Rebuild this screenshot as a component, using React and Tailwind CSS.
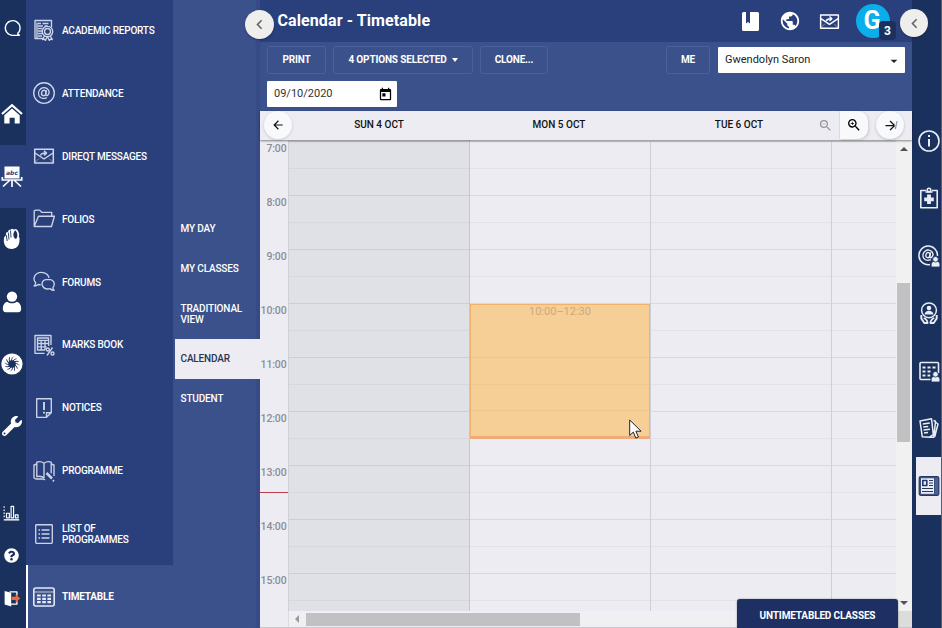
import React from 'react';
import { MdPublic, MdToday, MdArrowBack, MdArrowForward, MdZoomIn, MdZoomOut, MdChevronLeft, MdArrowDropDown } from 'react-icons/md';
import { FaWrench, FaQuestionCircle } from 'react-icons/fa';

const Svg = ({ size = 22, sw = 1.35, className = '', children }) => (
  <svg width={size} height={size} viewBox="0 0 22 22" fill="none" stroke="currentColor" strokeWidth={sw} strokeLinejoin="round" className={'shrink-0 ' + className}>
    {children}
  </svg>
);

const AtGlyph = ({ s = 1, x = 0, y = 0 }) => (
  <g transform={`translate(${x} ${y}) scale(${s})`}>
    <ellipse cx="10.8" cy="11" rx="2.2" ry="2.7" transform="rotate(15 10.8 11)" />
    <path d="M13.4 8.2l-.7 4.2c-.2 1.6 1.2 1.6 2.2.6 1.2-1.3 1.4-3.7.2-5.3C13.600 5.500 10.300 5 8 6.600 5.600 8.300 5 11.600 6.200 14c1.500 2.500 4.800 3 7.600 1.600" />
  </g>
);

const ReportIcon = () => (
  <Svg>
    <path d="M10 19.500H2V1.500h16.500V8" />
    <path d="M4 19V3.500M5 4.500h3M9.500 4.500h6M5 7h5M11.500 7h3M5 9.500h4.500M5 12h4M5 14.500h4M5 17h4" />
    <circle cx="14.500" cy="12.500" r="5.200" />
    <circle cx="14.500" cy="12.500" r="3" />
    <path d="M11.500 17l-2 3.500 2-.3.900 1.300 2-4 2 4 .9-1.300 2 .3-2-3.500" />
  </Svg>
);
const AttendanceIcon = () => (<Svg><circle cx="11" cy="11" r="10.300" /><AtGlyph /></Svg>);
const MailIcon = ({ size = 22 }) => (
  <Svg size={size} sw={1.500}>
    <path d="M1.700 4.200h18.600v13.800H1.700z" />
    <path d="M2 8l9 6 9-6" />
    <path d="M2 17.500l4-4M20 17.500l-4-4" strokeWidth=".8" opacity=".6" />
    <path d="M7.500 10.500c.6-1.800 2-2.500 5.300-2.400M11 5.800l2.500 2.300-2.500 2.300" />
  </Svg>
);
const FolderIcon = () => (
  <Svg><path d="M1.200 18.500V2.800l1.500-.700h4l2 2.300h10v3.800M1.200 18.500h17.300L21.400 8.200H5.500L1.200 18.500z" /></Svg>
);
const ForumIcon = () => (
  <Svg>
    <path d="M7.800 13.800c-.8 0-1.600-.1-2.400-.3-1.200 1-2.700 1.500-4.200 1.500.9-.9 1.500-2 1.500-3.200C.1 9 .5 4.600 4 2.500c4.600-2.600 11-.6 12 4.300" />
    <path d="M15 8.200c-3.600 0-6 2.100-6 4.900s2.700 4.900 6 4.900c.8 0 1.600-.1 2.300-.3 1 1.200 2.200 1.700 3.800 1.700-.8-.8-1.200-1.900-1.200-2.900 1-.9 1.400-2.100 1.400-3.400 0-2.800-2.700-4.900-6.300-4.900z" />
  </Svg>
);
const MarksIcon = () => (
  <Svg>
    <path d="M11.500 19.300H2V1.500h16V11" />
    <path d="M4.500 4h11v2.300h-11zM4.500 6.300V16H12M4.500 9.500h11.200M4.500 12.800h9M8.200 6.300V16M12 6.300V16M15.700 6.300V12" />
    <path d="M19.500 13.500l-5.500 8" /><circle cx="14.800" cy="15.500" r="1.500" /><circle cx="19.500" cy="19.500" r="1.500" />
  </Svg>
);
const NoticeIcon = () => (
  <Svg>
    <path d="M13.500 20.300H3.700V1.700h14.600v14l-4.800 4.600v-4.600h4.800" />
    <path d="M11 5v8" strokeWidth="1.900" /><path d="M11 14.800v1.800" strokeWidth="1.900" />
  </Svg>
);
const ProgrammeIcon = () => (
  <Svg>
    <path d="M11 3.200C8.500 1.400 5.800 1.400 3.800 2.200v14.500c2.400-.8 5-.6 7.200 1.300M11 3.200v14.800M11 3.200c2.500-1.800 5.200-1.800 7.200-1v11" />
    <path d="M3.800 4L1 5v13l2 1h7.500c.5.600 1 .6 1.600.3M18.200 4L21 5v11" />
    <path d="M13.500 13l5.500 5.500" strokeWidth="2.500" /><path d="M19.800 20.200l1.200 1" strokeWidth="1.800" />
  </Svg>
);
const ListIcon = () => (
  <Svg>
    <rect x="2.700" y="1.700" width="16.600" height="18.600" rx=".8" />
    <path d="M5.500 7H7M8.500 7h8M5.500 11H7M8.500 11h8M5.500 15H7M8.500 15h8" strokeWidth="1.600" />
  </Svg>
);
const TableIcon = () => (
  <Svg>
    <rect x=".8" y="2" width="20.400" height="18" rx="2" strokeWidth="1.600" />
    <path d="M1 6h20" strokeWidth=".8" />
    <path d="M4 9.500h3.700M9.200 9.500h3.700M14.400 9.500H18M4 12.800h3.700M9.200 12.800h3.700M14.400 12.800H18M4 16.200h3.700M9.200 16.200h3.700M14.400 16.200H18" strokeWidth="2.200" />
  </Svg>
);

const modules = [
  ['ACADEMIC REPORTS', ReportIcon],
  ['ATTENDANCE', AttendanceIcon],
  ['DIREQT MESSAGES', MailIcon],
  ['FOLIOS', FolderIcon],
  ['FORUMS', ForumIcon],
  ['MARKS BOOK', MarksIcon],
  ['NOTICES', NoticeIcon],
  ['PROGRAMME', ProgrammeIcon],
  ['LIST OF PROGRAMMES', ListIcon],
];

const HomeIcon = () => (
  <Svg>
    <path d="M1 11L11 2.200 21 11" strokeWidth="2.300" strokeLinejoin="miter" />
    <path d="M3.300 12.300L11 5.600l7.700 6.700v8.200h-5v-5.700H8.600v5.700H3.300z" fill="currentColor" stroke="none" />
  </Svg>
);
const BoardIcon = () => (
  <Svg sw={1.700}>
    <rect x="3.500" y=".5" width="15" height="12" fill="currentColor" stroke="none" />
    <path d="M1.300 11v3h19.400v-3M11 14v7M8.500 14.500l-6.500 6M13.500 14.500l6.500 6" strokeLinejoin="miter" />
    <text x="11" y="8.600" textAnchor="middle" fontSize="6" fontStyle="italic" fontWeight="700" fontFamily="DejaVu Sans" fill="#2a407c" stroke="none">abc</text>
  </Svg>
);
const HandIcon = () => (
  <Svg>
    <path d="M2.800 12.500L3.200 9l1.600-1.500.4-3L7 4l.8-2L10 1.600l1-.9 2 .8 2-.4 2 1.600 1.200 3.600-.4 3 .8.500-.2 3.800c-.3 4.300-3.200 7.400-7.600 7.400-4.700 0-8-3.500-8-8.500z" fill="currentColor" stroke="none" />
    <path d="M5.300 7L6.200 13M7.300 4.500L8 11.500M9.500 2.500L10 9.500" stroke="#1b315d" strokeWidth=".9" />
    <path d="M14 10.800c-2.300-2.500-2.200-6.500.4-8.600 2.200 2.300 2.700 5.500 1 8.600z" fill="#1b315d" stroke="none" />
  </Svg>
);
const PersonIcon = () => (
  <Svg><circle cx="11" cy="5.600" r="5.200" fill="currentColor" stroke="none" /><path d="M1.800 17.500c0-4 1.800-6 4.500-6.800 3 2.100 6.500 2.100 9.400 0 2.700.8 4.500 2.800 4.500 6.800 0 2.500-1 3.700-3 3.700H4.800c-2 0-3-1.200-3-3.700z" fill="currentColor" stroke="none" /></Svg>
);
const SunIcon = () => (
  <Svg>
    <circle cx="11" cy="11" r="10.600" fill="currentColor" stroke="none" />
    <circle cx="11" cy="11" r="3.800" fill="#1b315d" stroke="none" />
    {[0, 30, 60, 90, 120, 150, 180, 210, 240, 270, 300, 330].map((a) => (
      <path key={a} d="M10.600 8c-.3-1.600.2-2.900 1.700-4" stroke="#1b315d" strokeWidth=".9" transform={`rotate(${a} 11 11)`} />
    ))}
  </Svg>
);
const ChatIcon = () => (<Svg size={18} sw={1.600}><path d="M17.500 18A9 9 0 1 0 12 20h8.500M17.500 18l3 2" /></Svg>);
const ChartIcon = () => (
  <Svg size={17} sw={1.500}><path d="M1 20.500h20" strokeWidth="1.800" /><path d="M1.500 3v15" strokeDasharray="2 2" /><path d="M4.500 18v-6h3.700v6zM10.500 18V3h3.200v15zM16 18v-4h3.500v4z" /></Svg>
);
const ExitIcon = () => (
  <Svg size={18}>
    <path d="M8 3.500h9V8M17 15v3.500H9" strokeWidth="1.600" />
    <path d="M2 2.500l8 2v17l-8-2.500z" fill="currentColor" stroke="none" />
    <path d="M10.500 9.500h5V6.500l5.500 5-5.500 5v-3h-5z" fill="#ef6a3a" stroke="none" />
  </Svg>
);

const MiniPerson = () => (
  <g fill="currentColor" stroke="#1b315d" strokeWidth=".8"><path d="M13.200 22v-2.500c0-1.800 1.200-2.800 2.300-3h4c1.300.2 2.400 1.200 2.400 3V22z" /><circle cx="17.500" cy="14.300" r="2.800" /></g>
);
const InfoIcon = () => (<Svg sw={1.600}><circle cx="11" cy="11" r="10" /><path d="M11 9v7.500M11 5v2" strokeWidth="2" /></Svg>);
const ClipIcon = () => (
  <Svg sw={1.600}><path d="M8 3.500H2.800v17.200h16.400V3.500H14" /><circle cx="11" cy="3" r="1.800" /><path d="M7.500 5h7" /><path d="M11 7.500v9.600M6.200 12.300h9.600" strokeWidth="3.800" /></Svg>
);
const AtPersonIcon = () => (<Svg sw={1.500}><path d="M12 19.500A9.300 9.300 0 1 1 19.500 11" /><AtGlyph s={0.95} x={-0.3} y={-0.3} /><MiniPerson /></Svg>);
const CareIcon = () => (
  <Svg sw={1.500}>
    <circle cx="11" cy="8.300" r="7.400" /><circle cx="11" cy="6" r="2.300" fill="currentColor" stroke="none" /><path d="M6.600 12.500c0-5 8.800-5 8.800 0z" fill="currentColor" stroke="none" />
    <path d="M3.300 13v3.500l3 4.500h3.200c0-2.500-1.500-4-3.700-5M18.700 13v3.500l-3 4.500h-3.200c0-2.500 1.500-4 3.700-5" strokeWidth="1.900" />
  </Svg>
);
const TablePersonIcon = () => (
  <Svg sw={1.600}><rect x="2" y="2.500" width="18.500" height="17" rx="1" /><path d="M4.500 7.500h3M9.500 7.500h3M14.500 7.500h3M4.500 11.500h3M9.500 11.500h3M4.500 15.500h3M9.500 15.500h3" strokeWidth="2" /><path d="M12.500 13h9.500v9h-9.500z" fill="#1b315d" stroke="none" /><MiniPerson /></Svg>
);
const PapersIcon = () => (
  <Svg sw={1.500}><path d="M2 4l11.500-2.200 1.800 15.700-3.800 2.700-7.200-.4zM15.500 3.500l2 .8-1.700 16-4-.3M18 5.500l2 1.500-3.300 12.700" /><path d="M4.800 7l7-1M5.200 10l5-.6M5.500 13l6.500-.8M6 16l4-.5" /></Svg>
);
const NewsIcon = () => (
  <Svg className="text-[#23386a]">
    <rect x="1.200" y="1.700" width="19.600" height="18.600" rx="1.500" fill="#4d6290" strokeWidth="1.200" />
    <path d="M2.500 2.800h14v16.500h-14z" fill="#ececf2" strokeWidth=".8" />
    <rect x="4.800" y="5.500" width="4" height="5" strokeWidth="1.600" />
    <path d="M11 5.500h4M11 8h4M11 10.500h4M4 13.500h11M4 16.500h11" strokeWidth="1.200" />
  </Svg>
);

const RailCell = ({ icon: Icon, className = '' }) => (
  <div className={'flex shrink-0 items-center justify-center pr-[3px] ' + className}><Icon /></div>
);

const Rail = () => (
  <nav className="flex w-[26px] shrink-0 flex-col bg-[#1b315d] text-white">
    <RailCell icon={ChatIcon} className="mb-[27px] h-[56px]" />
    <RailCell icon={HomeIcon} className="h-[62px]" />
    <RailCell icon={BoardIcon} className="h-[63px] bg-[#2a407c]" />
    <RailCell icon={HandIcon} className="h-[62px]" />
    <RailCell icon={PersonIcon} className="h-[63px]" />
    <RailCell icon={SunIcon} className="h-[62px]" />
    <RailCell icon={() => <FaWrench size={20} />} className="h-[63px] pb-px" />
    <RailCell icon={ChartIcon} className="mt-auto h-[42px] pb-[2px]" />
    <RailCell icon={() => <FaQuestionCircle size={15} />} className="h-[43px]" />
    <RailCell icon={ExitIcon} className="mb-[9px] h-[42px]" />
  </nav>
);

const Modules = () => (
  <nav className="flex w-[147px] shrink-0 flex-col text-[10px] font-medium leading-[11px] tracking-[-0.2px] text-white">
    <div className="h-[565px] bg-[#2a407c] shadow-[0_0_1px_rgba(20,35,80,0.35)]">
      {modules.map(([label, Icon]) => (
        <div key={label} className="flex h-[62.900px] items-center gap-[7px] pb-[2px] pl-[7px]">
          <span className="text-[#cbd4e8]"><Icon /></span>
          <span className="w-[100px]">{label}</span>
        </div>
      ))}
    </div>
    <div className="flex grow items-center gap-[7px] border-l-2 border-white pl-[5px] font-bold">
      <span className="text-[#e3e8f4]"><TableIcon /></span>
      <span>TIMETABLE</span>
    </div>
  </nav>
);

const SubItem = ({ children, className = 'h-[40px]' }) => (
  <div className={'flex items-center pl-[7.500px] ' + className}>{children}</div>
);

const SubMenu = () => (
  <nav className="w-[87px] shrink-0 bg-[linear-gradient(90deg,transparent_82px,#364b86_84px)] pt-[208px] text-[10px] font-medium leading-[11px] tracking-[-0.150px] text-white">
    <SubItem>MY DAY</SubItem>
    <SubItem>MY CLASSES</SubItem>
    <SubItem className="h-[51px] w-[75px]">TRADITIONAL VIEW</SubItem>
    <div className="ml-[2px] flex h-[40px] items-center bg-[#ececf2] pb-px pl-[5.500px] text-[#2b3550]">CALENDAR</div>
    <SubItem className="h-[39px]">STUDENT</SubItem>
  </nav>
);

const ToolButton = ({ children, className }) => (
  <div className={'flex h-[28px] shrink-0 items-center justify-center rounded-[3px] border border-[#4c619b] pb-px text-[10px] font-bold tracking-[-0.150px] text-white ' + className}>{children}</div>
);

const Header = () => (
  <header className="flex h-[42px] shrink-0 items-center bg-[#2a407c] pl-[17.500px] text-white">
    <h1 className="grow text-[16px] font-bold leading-[20px] tracking-[0.1px]">Calendar - Timetable</h1>
    <div className="flex items-center">
      <svg width="17" height="19" viewBox="0 0 17 19"><path d="M1.500 0H4v11.500l2-1.500 2 1.500V0h7.500Q17 0 17 1.500v16Q17 19 15.500 19h-14Q0 19 0 17.500v-16Q0 0 1.500 0z" fill="white" /></svg>
      <MdPublic size={22} className="ml-[20px]" />
      <span className="ml-[18px]"><MailIcon size={21} /></span>
      <div className="relative mr-[22px] ml-[16px] flex size-[34px] items-center justify-center rounded-full bg-[#0aaeea] text-[25px] font-bold">
        <span className="pr-[2px]">G</span>
        <span className="absolute top-[17px] left-[23px] flex h-[19px] w-[17px] items-center justify-center rounded-[4px] bg-[#1b315d] text-[12px]">3</span>
      </div>
    </div>
  </header>
);

const Toolbar = () => (
  <div className="flex h-[69px] shrink-0 flex-col gap-[7px] pt-[4px] pl-[7px]">
    <div className="flex items-start pr-[7px]">
      <ToolButton className="w-[59px]">PRINT</ToolButton>
      <ToolButton className="ml-[7px] w-[140px] gap-[5px]">4 OPTIONS SELECTED <span className="border-x-[3px] border-t-4 border-x-transparent border-t-white" /></ToolButton>
      <ToolButton className="ml-[7px] w-[68px]">CLONE...</ToolButton>
      <ToolButton className="ml-auto w-[44px]">ME</ToolButton>
      <div className="ml-[8px] mt-px flex h-[26px] w-[187px] items-center justify-between rounded-[1px] bg-white pr-[3px] pl-[7px] text-[11px] text-[#222]">
        Gwendolyn Saron
        <MdArrowDropDown size={16} className="mt-[1px]" />
      </div>
    </div>
    <div className="flex h-[26px] w-[130px] items-center justify-between rounded-[1px] bg-white pr-[4px] pl-[7px] text-[11px] text-[#333]">
      09/10/2020
      <MdToday size={15} className="text-black" />
    </div>
  </div>
);

const DayHead = () => (
  <div className="relative z-10 flex h-[29px] shrink-0 items-center bg-[#ececf2] pb-[2px] pl-[29px] text-[10px] font-medium text-[#111] shadow-[0_1px_2px_rgba(0,0,0,0.45)]">
    <div className="w-[180px] text-center">SUN 4 OCT</div>
    <div className="w-[180px] text-center">MON 5 OCT</div>
    <div className="w-[180px] text-center">TUE 6 OCT</div>
    <div className="absolute top-0 left-[4px] flex size-[28px] items-center justify-center rounded-full bg-[#f8f9fb] shadow-[0_1px_3px_rgba(0,0,0,0.15)]"><MdArrowBack size={14} /></div>
    <div className="absolute top-0 left-[552px] flex h-[28px] w-[28px] items-center justify-center border-r border-[#dfe0e5] bg-[#ececf2] text-[#96979d]"><MdZoomOut size={15} /></div>
    <div className="absolute top-0 left-[580px] flex h-[28px] w-[28px] items-center justify-center rounded-r-[10px] bg-[#f8f9fb] text-black shadow-[1px_1px_3px_rgba(0,0,0,0.15)]"><MdZoomIn size={16} /></div>
    <div className="absolute top-0 left-[616px] flex size-[28px] items-center justify-center rounded-full bg-[#f8f9fb] shadow-[0_1px_3px_rgba(0,0,0,0.2)]">
      <MdArrowForward size={15} />
      <span className="absolute left-[13px] bg-linear-to-r from-transparent from-55% to-[#8b97b0] to-65% bg-clip-text text-transparent">W</span>
    </div>
  </div>
);

const hours = [7, 8, 9, 10, 11, 12, 13, 14, 15];

const DayColumn = ({ className, lines, children }) => (
  <div className={'relative shrink-0 ' + className}>
    {hours.map((h) => (
      <div key={h} className={'h-[54px] border-t ' + lines}><div className="h-[27px] border-b border-black/4" /></div>
    ))}
    {children}
  </div>
);

const Grid = () => (
  <div className="flex min-h-0 grow overflow-hidden bg-[#ececf2]">
    <div className="w-[29px] shrink-0 border-r border-[#cfd0d6] pt-[1px]">
      <div className="relative">
        {hours.map((h) => (
          <div key={h} className="flex h-[54px] justify-end pt-[1px] pr-[1.500px] text-[10.500px] font-medium leading-[13px] tracking-[-0.150px] text-[#8c8d94]">{h}:00</div>
        ))}
        <div className="absolute top-[351px] left-0 h-px w-[28px] bg-[#b5404a]" />
      </div>
    </div>
    <div className="flex w-[607px] shrink-0 overflow-hidden pt-[1px]">
      <DayColumn className="-mt-px w-[181px] border-r border-[#c6c7cc] bg-[#e0e1e6] pt-px" lines="border-[#cdced3]" />
      <DayColumn className="w-[181px] border-r border-[#cfd0d6]" lines="border-[#d8d9de]">
        <div className="absolute top-[163px] left-0 h-[135px] w-[180px] border border-b-[3px] border-[#f2b16c] border-b-[#efab78] bg-[#f5cf96] text-center text-[11px] leading-[13px] text-[#cfa878]">
          10:00–12:30
          <div className="mt-[39px] h-[54px] border-y border-black/4"><div className="h-[27px] border-b border-black/3" /></div>
        </div>
        <svg width="14" height="21" viewBox="0 0 14 21" className="absolute top-[278px] left-[159px]"><path d="M.7 1v15.500l3.600-3.400 2.500 6 2.600-1.100-2.500-5.800h5.200z" fill="white" stroke="#222" strokeWidth="1" /></svg>
      </DayColumn>
      <DayColumn className="w-[181px] border-r border-[#cfd0d6]" lines="border-[#d8d9de]" />
      <DayColumn className="w-[64px]" lines="border-[#d8d9de]" />
    </div>
    <div className="flex w-[16px] shrink-0 flex-col items-center bg-[#f1f1f1] pt-[7px] pr-px pb-[6px]">
      <span className="border-x-4 border-b-4 border-x-transparent border-b-[#505050]" />
      <div className="mt-[132px] h-[159px] w-[13px] bg-[#c1c1c3]" />
      <span className="mt-auto border-x-4 border-t-4 border-x-transparent border-t-[#505068]" />
    </div>
  </div>
);

const RightRail = () => (
  <aside className="flex w-[30px] shrink-0 flex-col border-r border-[#56606f] bg-[#1b315d] pt-[112px] text-[#e9edf6]">
    {[InfoIcon, ClipIcon, AtPersonIcon, CareIcon, TablePersonIcon, PapersIcon].map((Icon, i) => (
      <div key={i} className="flex h-[57.500px] items-center justify-center pl-[4px]"><Icon /></div>
    ))}
    <div className="ml-[4px] flex h-[58px] items-center justify-center bg-[#ececf2]"><NewsIcon /></div>
  </aside>
);

export default function App() {
  return (
    <div className="relative flex h-[628px] w-[942px] overflow-hidden bg-[#3b518b] font-['Roboto',sans-serif]">
      <Rail />
      <Modules />
      <SubMenu />
      <main className="relative flex w-[652px] shrink-0 flex-col">
        <Header />
        <Toolbar />
        <DayHead />
        <Grid />
        <div className="flex h-[17px] shrink-0 items-center border-b border-[#c8c8cc] bg-[#f0f0f2]">
          <span className="h-full w-[29px] border-r border-[#dcdce0] bg-[#ececf2]" />
          <span className="ml-[6px] border-y-4 border-r-4 border-y-transparent border-r-[#999]" />
          <span className="ml-[7px] h-[13px] w-[274px] bg-[#c1c1c3]" />
          <span className="ml-auto h-full w-[16px] bg-[#dcdcda]" />
        </div>
        <div className="absolute bottom-0 left-[477px] flex h-[29px] w-[161px] items-center justify-center rounded-t-[3px] bg-[#1e2f63] pt-[3px] text-[10px] font-bold tracking-[-0.150px] text-white shadow-[0_0_2px_rgba(0,0,0,0.4)]">UNTIMETABLED CLASSES</div>
      </main>
      <RightRail />
      <button className="absolute top-[10px] left-[245px] flex size-[29px] items-center justify-center rounded-full bg-[#eeeeec] text-[#666] shadow-[0_1px_2px_rgba(0,0,0,0.3)]"><MdChevronLeft size={19} /></button>
      <button className="absolute top-[9px] left-[900px] flex size-[28px] items-center justify-center rounded-full bg-[#eeeeec] text-[#666] shadow-[0_1px_2px_rgba(0,0,0,0.3)]"><MdChevronLeft size={19} /></button>
    </div>
  );
}
